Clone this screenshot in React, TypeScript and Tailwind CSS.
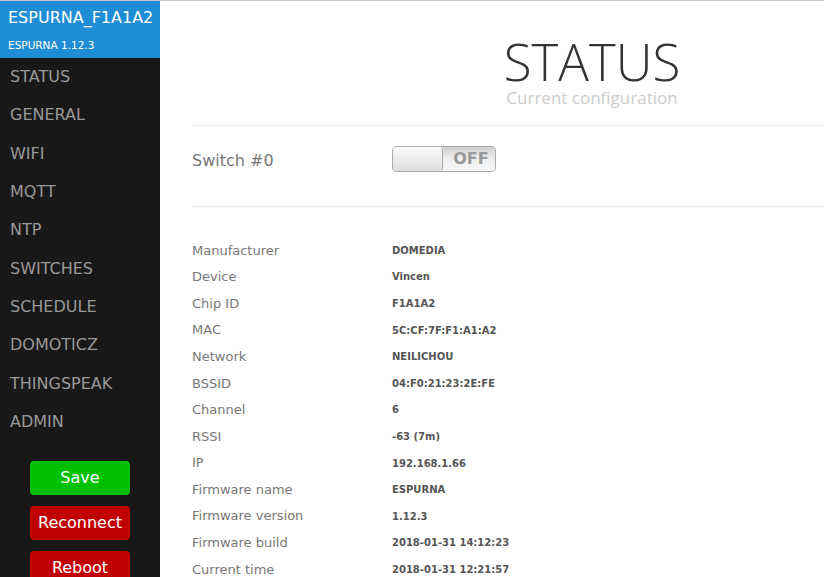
import React from 'react';

const menu = ['STATUS', 'GENERAL', 'WIFI', 'MQTT', 'NTP', 'SWITCHES', 'SCHEDULE', 'DOMOTICZ', 'THINGSPEAK', 'ADMIN'];

const info: [string, string][] = [
  ['Manufacturer', 'DOMEDIA'],
  ['Device', 'Vincen'],
  ['Chip ID', 'F1A1A2'],
  ['MAC', '5C:CF:7F:F1:A1:A2'],
  ['Network', 'NEILICHOU'],
  ['BSSID', '04:F0:21:23:2E:FE'],
  ['Channel', '6'],
  ['RSSI', '-63 (7m)'],
  ['IP', '192.168.1.66'],
  ['Firmware name', 'ESPURNA'],
  ['Firmware version', '1.12.3'],
  ['Firmware build', '2018-01-31 14:12:23'],
  ['Current time', '2018-01-31 12:21:57'],
];

const App: React.FC = () => {
  return (
    <div className="w-[824px] h-[577px] overflow-hidden flex border-t border-[#c8c8c8] bg-white font-['DejaVu_Sans',sans-serif]">
      {/* sidebar */}
      <div className="w-[160px] shrink-0 bg-[#191818] flex flex-col">
        <div className="bg-[#1f8dd6] h-[57px] shrink-0 px-2 pt-[7px]">
          <div className="text-[16px] text-white leading-[20px]">ESPURNA_F1A1A2</div>
          <div className="text-[10.5px] text-white mt-[10px] leading-[14px]">ESPURNA 1.12.3</div>
        </div>
        <ul className="shrink-0">
          {menu.map((m) => (
            <li key={m} className="h-[38.3px] flex items-center px-[10px] text-[16px] text-[#999]">
              {m}
            </li>
          ))}
        </ul>
        <div className="shrink-0 flex flex-col items-center gap-[11px] mt-[20px]">
          <button className="w-[100px] h-[34px] shrink-0 rounded-[4px] bg-[#00c000] text-white text-[16px]">Save</button>
          <button className="w-[100px] h-[34px] shrink-0 rounded-[4px] bg-[#c00000] text-white text-[16px]">Reconnect</button>
          <button className="w-[100px] h-[34px] shrink-0 rounded-[4px] bg-[#c00000] text-white text-[16px]">Reboot</button>
        </div>
      </div>

      {/* main */}
      <div className="flex-1 overflow-hidden pl-[32px]">
        <div className="w-[800px]">
          <div className="text-center pt-[32px] pb-[18px] border-b border-[#eee]">
            <h1 className="font-['Open_Sans',sans-serif] font-light text-[51px] leading-[56px] text-[#333]">STATUS</h1>
            <h2 className="font-['Open_Sans',sans-serif] text-[17px] leading-[18px] text-[#ccc]">Current configuration</h2>
          </div>
          <div className="flex items-start h-[81px] pt-[20px] border-b border-[#eee]">
            <div className="w-[200px] pt-[2px] text-[16px] leading-[26px] text-[#777]">Switch #0</div>
            <div className="w-[104px] h-[26px] rounded-[4px] border border-[#aaa] flex overflow-hidden">
              <div className="w-[50px] h-full bg-gradient-to-b from-[#fafafa] to-[#dedede] border-r border-[#aaa] rounded-r-[3px]" />
              <div className="flex-1 flex items-center justify-center pl-[4px] bg-gradient-to-b from-[#cfcfcf] via-[#efefef] to-[#f6f6f6] text-[16px] font-bold text-[#999]">
                OFF
              </div>
            </div>
          </div>
          <div className="pt-[30px]">
            {info.map(([k, v]) => (
              <div key={k} className="flex items-center h-[26.6px]">
                <div className="w-[200px] text-[13px] text-[#777]">{k}</div>
                <div className="text-[10px] font-bold text-[#555]">{v}</div>
              </div>
            ))}
          </div>
        </div>
      </div>
    </div>
  );
};

export default App;
